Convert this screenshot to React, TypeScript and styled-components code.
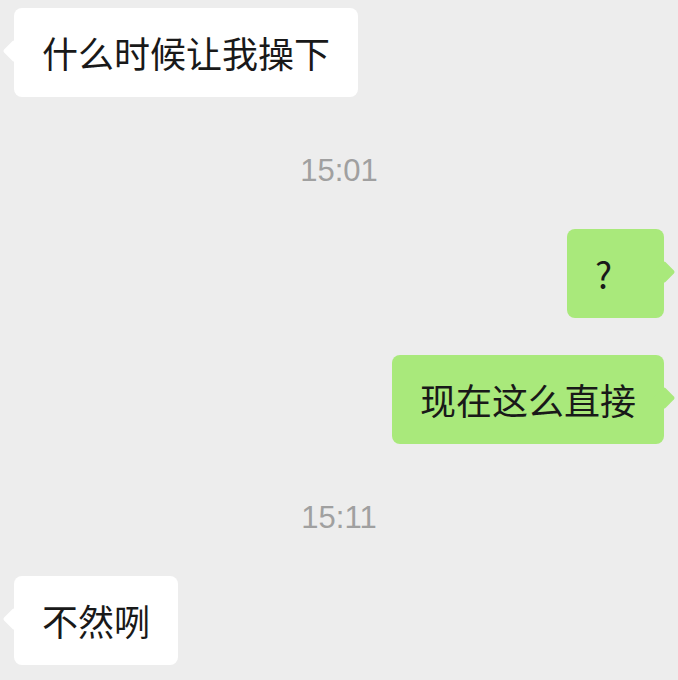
import React from "react";
import styled, { createGlobalStyle, css } from "styled-components";

const Global = createGlobalStyle`
  html, body { margin: 0; padding: 0; background: #ededed; }
  body { font-family: "Noto Sans CJK SC", "Noto Sans", sans-serif; }
`;

const Chat = styled.div`
  display: flex;
  flex-direction: column;
  padding: 8px 14px 0;
  min-height: 680px;
  box-sizing: border-box;
  background: #ededed;
`;

const Row = styled.div<{ $mine?: boolean }>`
  display: flex;
  justify-content: ${(p) => (p.$mine ? "flex-end" : "flex-start")};
  & + & { margin-top: 37px; }
`;

const Bubble = styled.div<{ $mine?: boolean }>`
  position: relative;
  box-sizing: border-box;
  min-width: 97px;
  padding: 20px 28px;
  border-radius: 8px;
  font-size: 36px;
  line-height: 49px;
  color: #191919;
  white-space: nowrap;
  background: ${(p) => (p.$mine ? "#a9e97b" : "#ffffff")};
  &::before {
    content: "";
    position: absolute;
    top: 35px;
    width: 16px;
    height: 16px;
    border-radius: 2px;
    background: inherit;
    transform: rotate(45deg);
    ${(p) =>
      p.$mine
        ? css`right: -8px;`
        : css`left: -8px;`}
  }
`;

const Time = styled.div`
  margin: 54px 0 38px;
  text-align: center;
  font-family: "Liberation Sans", Arial, sans-serif;
  font-size: 31px;
  line-height: 40px;
  color: #a0a0a0;
`;

type Item =
  | { kind: "msg"; mine?: boolean; text: string }
  | { kind: "time"; text: string };

const items: Item[] = [
  { kind: "msg", text: "什么时候让我操下" },
  { kind: "time", text: "15:01" },
  { kind: "msg", mine: true, text: "?" },
  { kind: "msg", mine: true, text: "现在这么直接" },
  { kind: "time", text: "15:11" },
  { kind: "msg", text: "不然咧" },
];

export default function App() {
  return (
    <>
      <Global />
      <Chat>
        {items.map((it, i) =>
          it.kind === "time" ? (
            <Time key={i}>{it.text}</Time>
          ) : (
            <Row key={i} $mine={it.mine}>
              <Bubble $mine={it.mine}>{it.text}</Bubble>
            </Row>
          )
        )}
      </Chat>
    </>
  );
}
